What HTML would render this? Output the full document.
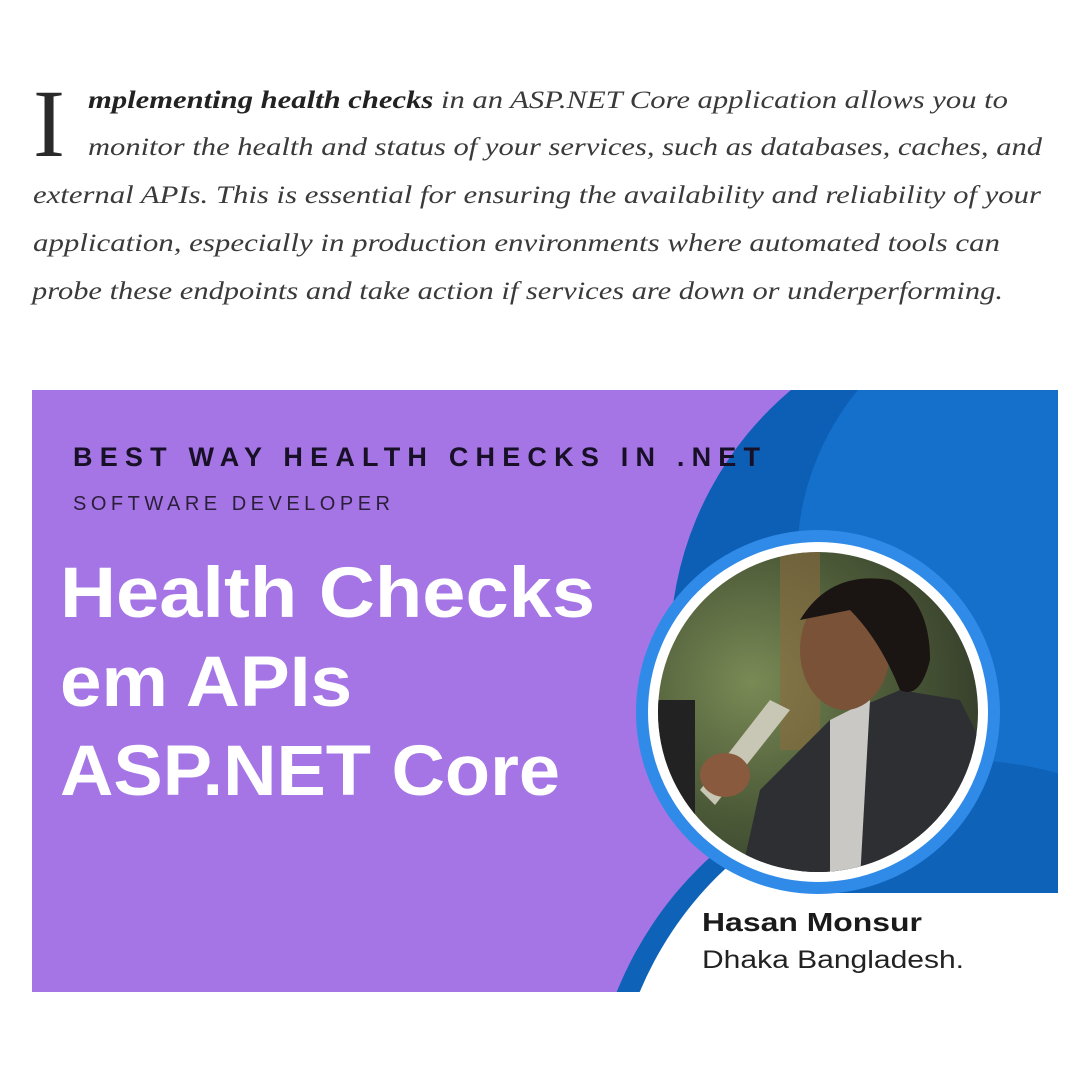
<!DOCTYPE html>
<html><head><meta charset="utf-8"><style>
html,body{margin:0;padding:0;background:#fff;width:1080px;height:1080px;overflow:hidden}
svg{display:block}
</style></head><body>
<svg width="1080" height="1080" viewBox="0 0 1080 1080" xmlns="http://www.w3.org/2000/svg">
<defs>
<clipPath id="ban"><rect x="32" y="390" width="1026" height="602"/></clipPath>
<clipPath id="wclip"><path d="M500 855 H820 V893 H1060 V1000 H500Z"/></clipPath>
<clipPath id="ph"><circle cx="818" cy="712" r="160"/></clipPath>
<radialGradient id="bg1" cx="0.3" cy="0.4" r="0.8"><stop offset="0" stop-color="#7a8a55"/><stop offset="0.5" stop-color="#4c5a38"/><stop offset="1" stop-color="#2e3526"/></radialGradient>
</defs>
<g font-family="'Liberation Serif',serif" font-style="italic" font-size="25" fill="#3a3a3a">
<text x="33" y="156" font-style="normal" font-size="96" fill="#2a2a2a">I</text>
<text x="88" y="108" textLength="920" lengthAdjust="spacingAndGlyphs"><tspan font-weight="bold" fill="#222">mplementing health checks</tspan> in an ASP.NET Core application allows you to</text>
<text x="88" y="155" textLength="954" lengthAdjust="spacingAndGlyphs">monitor the health and status of your services, such as databases, caches, and</text>
<text x="33" y="203" textLength="1008" lengthAdjust="spacingAndGlyphs">external APIs. This is essential for ensuring the availability and reliability of your</text>
<text x="33" y="251" textLength="967" lengthAdjust="spacingAndGlyphs">application, especially in production environments where automated tools can</text>
<text x="32" y="299" textLength="971" lengthAdjust="spacingAndGlyphs">probe these endpoints and take action if services are down or underperforming.</text>
</g>
<g clip-path="url(#ban)">
<rect x="32" y="390" width="1026" height="602" fill="#a575e5"/>
<circle cx="1010" cy="650" r="340" fill="#0d5fb5"/>
<circle cx="1065" cy="560" r="268" fill="#1570cc"/>
<circle cx="960" cy="1130" r="370" fill="#0e62b8"/>
<circle cx="970" cy="1130" r="358" fill="#fff" clip-path="url(#wclip)"/>
<circle cx="818" cy="712" r="182" fill="#2f8ae8"/>
<circle cx="818" cy="712" r="170" fill="#fff"/>
<g clip-path="url(#ph)">
<rect x="650" y="550" width="340" height="330" fill="url(#bg1)"/>
<rect x="780" y="550" width="40" height="200" fill="#8a6a40" opacity="0.6"/>
<path d="M740 880 L760 790 L830 720 L900 690 L960 700 L990 760 L990 880Z" fill="#2d2f33"/>
<path d="M830 720 L870 700 L860 880 L830 880Z" fill="#c9c8c4"/>
<ellipse cx="845" cy="650" rx="45" ry="60" fill="#7a5238"/>
<path d="M800 620 Q830 570 890 580 Q930 600 930 660 Q920 700 900 690 Q880 640 850 610Z" fill="#1a1512"/>
<path d="M700 790 L770 700 L790 710 L715 805Z" fill="#c8c6b4"/>
<ellipse cx="725" cy="775" rx="25" ry="22" fill="#8a5a3e"/>
<rect x="650" y="700" width="45" height="150" fill="#222"/>
</g>
</g>
<g font-family="'Liberation Sans',sans-serif">
<text x="73" y="466" font-size="27" font-weight="bold" fill="#171026" textLength="687" lengthAdjust="spacing">BEST WAY HEALTH CHECKS IN .NET</text>
<text x="73" y="510" font-size="20" fill="#2a1e3a" textLength="317" lengthAdjust="spacing">SOFTWARE DEVELOPER</text>
<g fill="#fff" font-weight="bold" font-size="71">
<text x="60" y="617" textLength="535" lengthAdjust="spacingAndGlyphs">Health Checks</text>
<text x="60" y="706" textLength="292" lengthAdjust="spacingAndGlyphs">em APIs</text>
<text x="60" y="795" textLength="500" lengthAdjust="spacingAndGlyphs">ASP.NET Core</text>
</g>
<text x="702" y="931" font-size="26" font-weight="bold" fill="#1a1a1a" textLength="220" lengthAdjust="spacingAndGlyphs">Hasan Monsur</text>
<text x="702" y="968" font-size="25" fill="#222" textLength="262" lengthAdjust="spacingAndGlyphs">Dhaka Bangladesh.</text>
</g>
</svg>
</body></html>
